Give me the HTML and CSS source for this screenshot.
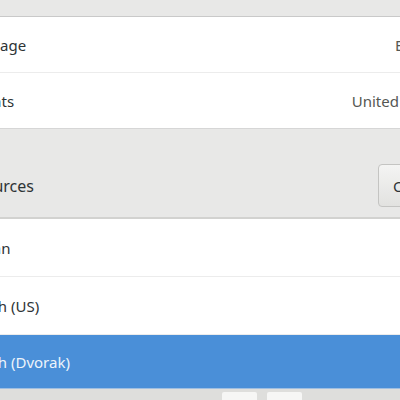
FILE: index.html
```html
<!DOCTYPE html>
<html lang="en">
<head>
    <meta charset="UTF-8">
    <title>Region &amp; Language</title>
    <link rel="stylesheet" href="styles.css">
</head>
<body>
    <div class="panel">
        <div class="frame">
            <div class="row">
                <span>Language</span>
                <span class="value">English</span>
            </div>
            <div class="row last">
                <span>Formats</span>
                <span class="value">United States</span>
            </div>
        </div>

        <div class="section-head">
            <span class="heading">Input Sources</span>
            <button class="options">Options</button>
        </div>

        <div class="list">
            <div class="item">Russian</div>
            <div class="item">English (US)</div>
            <div class="item selected">English (Dvorak)</div>
            <div class="toolbar">
                <span class="tool-btn"></span>
                <span class="tool-btn"></span>
            </div>
        </div>
    </div>
</body>
</html>
```

FILE: styles.css
```css
body {
    margin: 0;
    height: 400px;
    overflow: hidden;
    background: #e8e8e7;
    font-family: "Noto Sans", "Open Sans", sans-serif;
    font-size: 15px;
    color: #2e3436;
}
.panel {
    margin: 16px -62px 0 -60px;
}
.frame {
    background: white;
    border-top: 1px solid #c9c9c9;
    border-bottom: 1px solid #d6d6d6;
}
.row {
    display: flex;
    justify-content: space-between;
    align-items: center;
    height: 55px;
    padding: 0 16px;
    border-bottom: 1px solid #ececec;
}
.row.last {
    border-bottom: none;
}
.value {
    color: #555753;
}
.section-head {
    display: flex;
    justify-content: space-between;
    align-items: center;
    padding: 35px 6px 10px 0;
}
.heading {
    margin-left: -10px;
    font-size: 16px;
}
.options {
    height: 43px;
    width: 78px;
    padding: 0 14px;
    border: 1px solid #c4c4c2;
    border-radius: 4px;
    background: linear-gradient(#f4f4f3, #e2e2e0);
    font-family: inherit;
    font-size: 15px;
    color: #2e3436;
}
.list {
    background: white;
    border-top: 2px solid #d2d2d0;
}
.item {
    display: flex;
    align-items: center;
    height: 57px;
    padding: 0 16px;
    border-bottom: 1px solid #ececec;
}
.item.selected {
    height: 53px;
    background: #4a8fd8;
    color: #eef4fb;
    border-bottom: 1px solid #9fbfe2;
}
.toolbar {
    display: flex;
    gap: 10px;
    height: 20px;
    padding: 3px 0 0 282px;
    background: #dededc;
}
.tool-btn {
    width: 35px;
    height: 20px;
    background: #f6f6f5;
    border-radius: 2px;
}
```
